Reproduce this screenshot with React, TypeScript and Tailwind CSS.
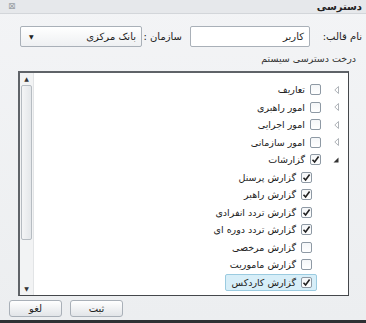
import React from 'react';

type Node = { label: string; checked: boolean; level: 0 | 1; arrow?: 'closed' | 'open'; selected?: boolean };

const nodes: Node[] = [
  { label: 'تعاریف', checked: false, level: 0, arrow: 'closed' },
  { label: 'امور راهبری', checked: false, level: 0, arrow: 'closed' },
  { label: 'امور اجرایی', checked: false, level: 0, arrow: 'closed' },
  { label: 'امور سازمانی', checked: false, level: 0, arrow: 'closed' },
  { label: 'گزارشات', checked: true, level: 0, arrow: 'open' },
  { label: 'گزارش پرسنل', checked: true, level: 1 },
  { label: 'گزارش راهبر', checked: true, level: 1 },
  { label: 'گزارش تردد انفرادی', checked: true, level: 1 },
  { label: 'گزارش تردد دوره ای', checked: true, level: 1 },
  { label: 'گزارش مرخصی', checked: false, level: 1 },
  { label: 'گزارش ماموریت', checked: false, level: 1 },
  { label: 'گزارش کاردکس', checked: true, level: 1, selected: true },
];

function Check({ checked }: { checked: boolean }) {
  return (
    <span className="flex h-[11px] w-[11px] items-center justify-center rounded-[2px] border border-[#8e99a4] bg-gradient-to-b from-[#f4f6f8] to-white">
      {checked && (
        <svg width="9" height="9" viewBox="0 0 9 9">
          <path d="M1.5 4.8 L3.6 7 L7.6 1.6" fill="none" stroke="#222" strokeWidth="1.6" />
        </svg>
      )}
    </span>
  );
}

function Arrow({ kind }: { kind: 'closed' | 'open' }) {
  if (kind === 'open') {
    return (
      <svg width="6" height="6" viewBox="0 0 6 6">
        <path d="M0.5 5.5 L5.5 5.5 L5.5 0.5 Z" fill="#333" />
      </svg>
    );
  }
  return (
    <svg width="5" height="8" viewBox="0 0 5 8">
      <path d="M4.5 0.5 L0.8 4 L4.5 7.5 Z" fill="none" stroke="#a7acb1" strokeWidth="0.9" />
    </svg>
  );
}

export default function App() {
  const font = { fontFamily: '"DejaVu Sans", Tahoma, sans-serif' };
  return (
    <div
      dir="rtl"
      style={font}
      className="flex h-[323px] w-[366px] flex-col border-b-[3px] border-[#2e3033] bg-gradient-to-b from-[#f3f4f6] to-[#eceef0] text-[#222]"
    >
      <div className="flex h-[14px] shrink-0 items-center justify-between border-b border-[#d3d6da] bg-[#e6e8eb] pl-[8px] pr-[4px]">
        <span className="pt-[1px] text-[10px] font-bold leading-[12px]">دسترسی</span>
        <span className="text-[9px] leading-none text-[#9aa0a6]">⊠</span>
      </div>

      <div className="mt-[12px] flex h-[21px] items-center pr-[4px]">
        <span className="w-[52px] whitespace-nowrap text-[10px]">نام قالب:</span>
        <div className="flex h-[21px] w-[120px] items-center rounded-[2px] border border-[#a9b0b8] bg-white px-[5px] text-[10px]">
          کاربر
        </div>
        <span className="mr-[8px] w-[36px] whitespace-nowrap text-[10px]">سازمان :</span>
        <div className="mr-[4px] flex h-[21px] w-[122px] items-center justify-between rounded-[2px] border border-[#a9b0b8] bg-gradient-to-b from-white to-[#eef0f2] px-[5px] text-[10px]">
          <span>بانک مرکزی</span>
          <span className="ml-[3px] text-[6px]">▼</span>
        </div>
      </div>

      <div className="mt-[5px] h-[13px] pr-[10px] text-[9.5px] leading-[13px] text-[#333]">درخت دسترسی سیستم</div>

      <div className="mr-[17px] mt-[6px] flex h-[225px] w-[331px] border-b border-l-2 border-r border-t-2 border-[#5f6368] border-b-[#44474b] border-r-[#44474b] bg-white">
        <div className="flex-1 pr-[6px] pt-[8px]">
          {nodes.map((n) => (
            <div key={n.label} className="flex h-[17.5px] items-center">
              <span className="flex w-[12px] justify-center">{n.arrow && <Arrow kind={n.arrow} />}</span>
              <span className={n.level === 1 ? 'mr-[13px]' : 'mr-[4px]'} />
              <div
                className={
                  n.selected
                    ? 'flex h-[17px] items-center rounded-[2px] border border-[#9bcbe0] bg-[#d7eef8] pl-[6px] pr-[4px]'
                    : 'flex items-center pr-[5px]'
                }
              >
                <Check checked={n.checked} />
                <span className="mr-[5px] text-[9.5px] leading-none">{n.label}</span>
              </div>
            </div>
          ))}
        </div>
        <div className="flex w-[14px] flex-col items-center border-r border-[#e2e4e6] bg-[#f2f3f4] py-[3px]">
          <span className="text-[6px] leading-none text-[#333]">▲</span>
          <div className="mt-[3px] h-[155px] w-[11px] rounded-[2px] border border-[#b6bcc2] bg-gradient-to-r from-[#f4f5f6] to-[#e4e7ea]" />
          <div className="flex-1" />
          <span className="text-[6px] leading-none text-[#333]">▼</span>
        </div>
      </div>

      <div className="mt-[4px] flex gap-[8px] pl-[9px]" dir="ltr">
        <button className="h-[17px] w-[53px] rounded-[3px] border border-[#a9b0b8] bg-gradient-to-b from-white to-[#e2e5e8] text-[10px]">لغو</button>
        <button className="h-[17px] w-[53px] rounded-[3px] border border-[#a9b0b8] bg-gradient-to-b from-white to-[#e2e5e8] text-[10px]">ثبت</button>
      </div>
    </div>
  );
}
